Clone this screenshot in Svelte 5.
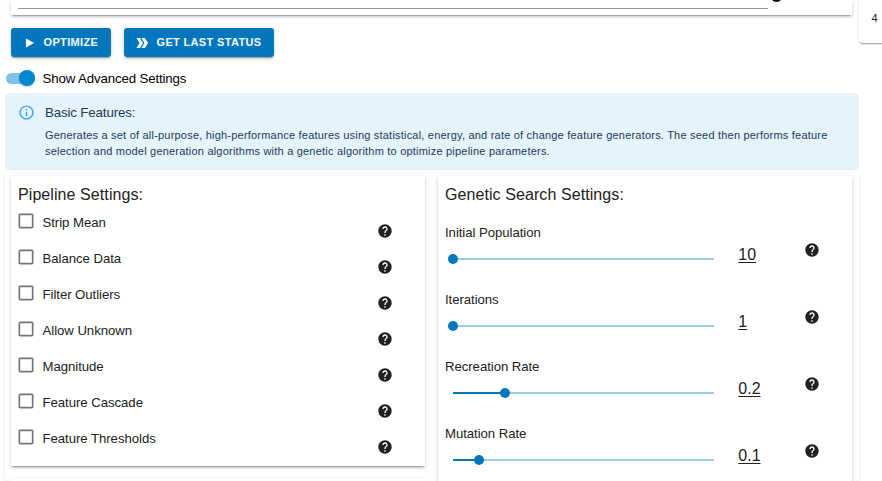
<script>
  const options = ['Strip Mean', 'Balance Data', 'Filter Outliers', 'Allow Unknown', 'Magnitude', 'Feature Cascade', 'Feature Thresholds'];
  const sliders = [
    { name: 'Initial Population', value: '10', pos: 0 },
    { name: 'Iterations', value: '1', pos: 0 },
    { name: 'Recreation Rate', value: '0.2', pos: 20 },
    { name: 'Mutation Rate', value: '0.1', pos: 10 }
  ];
</script>

{#snippet help()}
  <svg class="help" viewBox="0 0 24 24"><path d="M12 2C6.48 2 2 6.48 2 12s4.48 10 10 10 10-4.48 10-10S17.52 2 12 2zm1 17h-2v-2h2v2zm2.07-7.75-.9.92C13.45 12.9 13 13.5 13 15h-2v-.5c0-1.1.45-2.1 1.17-2.83l1.24-1.26c.37-.36.59-.86.59-1.41 0-1.1-.9-2-2-2s-2 .9-2 2H8c0-2.21 1.79-4 4-4s4 1.79 4 4c0 .88-.36 1.68-.93 2.25z" /></svg>
{/snippet}

<div class="page">
  <main>
    <section class="card query">
      <div class="field"></div>
      <svg class="edge" viewBox="0 0 11 3"><path d="M1 0H10Q8.500 2 5.500 2T1 0z" /></svg>
    </section>

    <div class="actions">
      <button class="optimize">
        <svg viewBox="0 0 12 12"><path d="M3 1.500l8 4.500-8 4.500z" /></svg>
        <span>OPTIMIZE</span>
      </button>
      <button class="status">
        <svg viewBox="0 0 12 12"><path d="M.5 1h3.500L7 6l-3 5H.5L3.500 6zM5.500 1H9l3 5-3 5H5.500L8.500 6z" /></svg>
        <span>GET LAST STATUS</span>
      </button>
    </div>

    <label class="toggle"><span class="track"><span class="knob"></span></span><span class="toggle-text">Show Advanced Settings</span></label>

    <section class="alert">
      <svg viewBox="0 0 24 24"><path d="M11 7h2v2h-2zm0 4h2v6h-2zm1-9C6.48 2 2 6.48 2 12s4.48 10 10 10 10-4.48 10-10S17.52 2 12 2zm0 18c-4.41 0-8-3.59-8-8s3.59-8 8-8 8 3.59 8 8-3.59 8-8 8z" /></svg>
      <div>
        <h3>Basic Features:</h3>
        <p>Generates a set of all-purpose, high-performance features using statistical, energy, and rate of change feature generators. The seed then performs feature<br />selection and model generation algorithms with a genetic algorithm to optimize pipeline parameters.</p>
      </div>
    </section>

    <div class="settings">
      <div class="column">
        <section class="card pipeline">
          <h2>Pipeline Settings:</h2>
          {#each options as option}
            <div class="option">
              <svg class="box" viewBox="0 0 24 24"><path d="M19 5v14H5V5h14m0-2H5c-1.1 0-2 .9-2 2v14c0 1.1.9 2 2 2h14c1.1 0 2-.9 2-2V5c0-1.1-.9-2-2-2z" /></svg>
              <span class="name">{option}</span>
              {@render help()}
            </div>
          {/each}
        </section>
        <section class="card next"></section>
      </div>
      <section class="card genetic">
        <h2>Genetic Search Settings:</h2>
        {#each sliders as slider}
          <div class="slider">
            <div class="control">
              <div class="name">{slider.name}</div>
              <div class="rail">
                <div class="fill" style="width: {slider.pos}%"></div>
                <div class="thumb" style="left: {slider.pos}%"></div>
              </div>
            </div>
            <div class="value"><span>{slider.value}</span></div>
            {@render help()}
          </div>
        {/each}
      </section>
    </div>
  </main>
  <aside>4</aside>
</div>

<style>
  :global(body) { background: #fff; overflow: hidden; }
  * { box-sizing: border-box; }
  .page { display: flex; width: 882px; height: 481px; overflow: hidden; font-family: "Liberation Sans", Arial, sans-serif; color: #212121; }
  main { width: 859px; padding-left: 5px; display: flex; flex-direction: column; flex: none; }
  .card { background: #fff; box-shadow: 0 3px 1px -2px rgba(0,0,0,.2), 0 2px 2px rgba(0,0,0,.14), 0 1px 5px rgba(0,0,0,.12); }
  .query { height: 15px; margin: 0 7px 0 6px; display: flex; flex: none; }
  .field { width: 750px; height: 9px; margin-left: 7px; border-bottom: 1px solid #949494; }
  .edge { width: 11px; height: 3px; margin-left: 3px; fill: #111; }
  .actions { display: flex; gap: 13px; padding: 13px 0 0 6px; height: 43px; }
  button { display: flex; align-items: center; height: 29px; padding: 0; border: 0; border-radius: 3px; background: #0277bd; color: #f2f8fc; font: 700 11px/29px "Liberation Sans", Arial, sans-serif; box-shadow: 0 3px 1px -2px rgba(0,0,0,.2), 0 2px 2px rgba(0,0,0,.14), 0 1px 5px rgba(0,0,0,.12); white-space: nowrap; }
  button svg { width: 12px; height: 12px; margin-left: 12px; fill: #fff; flex: none; }
  button span { margin-left: 8.500px; letter-spacing: .34px; }
  .optimize { width: 100px; }
  .status { width: 150px; }
  .toggle { display: flex; align-items: center; height: 35px; padding-top: 5px; }
  .track { width: 29px; height: 11px; margin-left: 1px; border-radius: 6px; background: #81c2e6; display: flex; align-items: center; justify-content: flex-end; }
  .knob { width: 16px; height: 16px; border-radius: 50%; background: #0288d1; flex: none; box-shadow: 0 1px 2px rgba(0,0,0,.2); }
  .toggle-text { margin-left: 7.500px; font-size: 13.3px; color: #000; letter-spacing: -.15px; }
  .alert { display: flex; height: 77px; background: #e5f3fd; border-radius: 4px; color: #1c3c52; flex: none; }
  .alert svg { width: 17px; height: 17px; fill: #36a3f3; margin: 11px 0 0 13px; flex: none; }
  .alert > div { padding: 11px 0 0 10px; }
  h3 { margin: 0; font-size: 13.3px; line-height: 18px; font-weight: 400; letter-spacing: -.14px; }
  p { margin: 5px 0 0; font-size: 11px; line-height: 16px; white-space: nowrap; letter-spacing: .208px; }
  .settings { display: flex; gap: 13px; height: 311px; padding: 6px 7px 0 6px; align-items: flex-start; border-radius: 4px; box-shadow: 0 1px 3px rgba(0,0,0,.12); flex: none; }
  .column { width: 414px; display: flex; flex-direction: column; gap: 13px; flex: none; }
  .pipeline { height: 290px; }
  .next { height: 40px; }
  .genetic { width: 414px; height: 340px; flex: none; }
  h2 { margin: 0; padding: 9px 0 0 7px; height: 35px; font-size: 16px; line-height: 20px; font-weight: 400; letter-spacing: .08px; }
  .option { display: flex; height: 36px; }
  .box { width: 20px; height: 20px; margin-left: 4.5px; fill: #757575; flex: none; }
  .option .name { width: 334.500px; margin-left: 7px; padding-top: 3px; font-size: 13.2px; line-height: 18px; letter-spacing: -.05px; }
  .help { width: 16px; height: 16px; fill: #212121; flex: none; }
  .option .help { margin-top: 12px; }
  .slider { display: flex; height: 67px; padding-left: 7px; }
  .slider .name { padding-top: 13px; font-size: 13.2px; line-height: 18px; letter-spacing: -.06px; }
  .control { width: 269px; }
  .rail { position: relative; width: 261px; height: 2px; margin: 16px 0 0 8px; background: #9bcae5; }
  .fill { height: 2px; background: #0277bd; }
  .thumb { position: absolute; top: -4px; width: 10px; height: 10px; margin-left: -5.500px; border-radius: 50%; background: #0277bd; }
  .value { width: 66px; margin-left: 24.300px; margin-right: -.3px; padding-top: 34px; font-size: 16px; line-height: 20px; }
  .value span { text-decoration: underline; text-decoration-thickness: 1px; text-underline-offset: 2px; }
  .slider .help { margin-top: 31px; }
  aside { width: 60px; height: 43px; padding: 11px 0 0 12.500px; font-size: 11px; line-height: 14px; flex: none; border-radius: 0 0 4px 4px; box-shadow: 0 2px 1px -1px rgba(0,0,0,.2), 0 1px 1px rgba(0,0,0,.14), 0 1px 3px rgba(0,0,0,.12); }
</style>
